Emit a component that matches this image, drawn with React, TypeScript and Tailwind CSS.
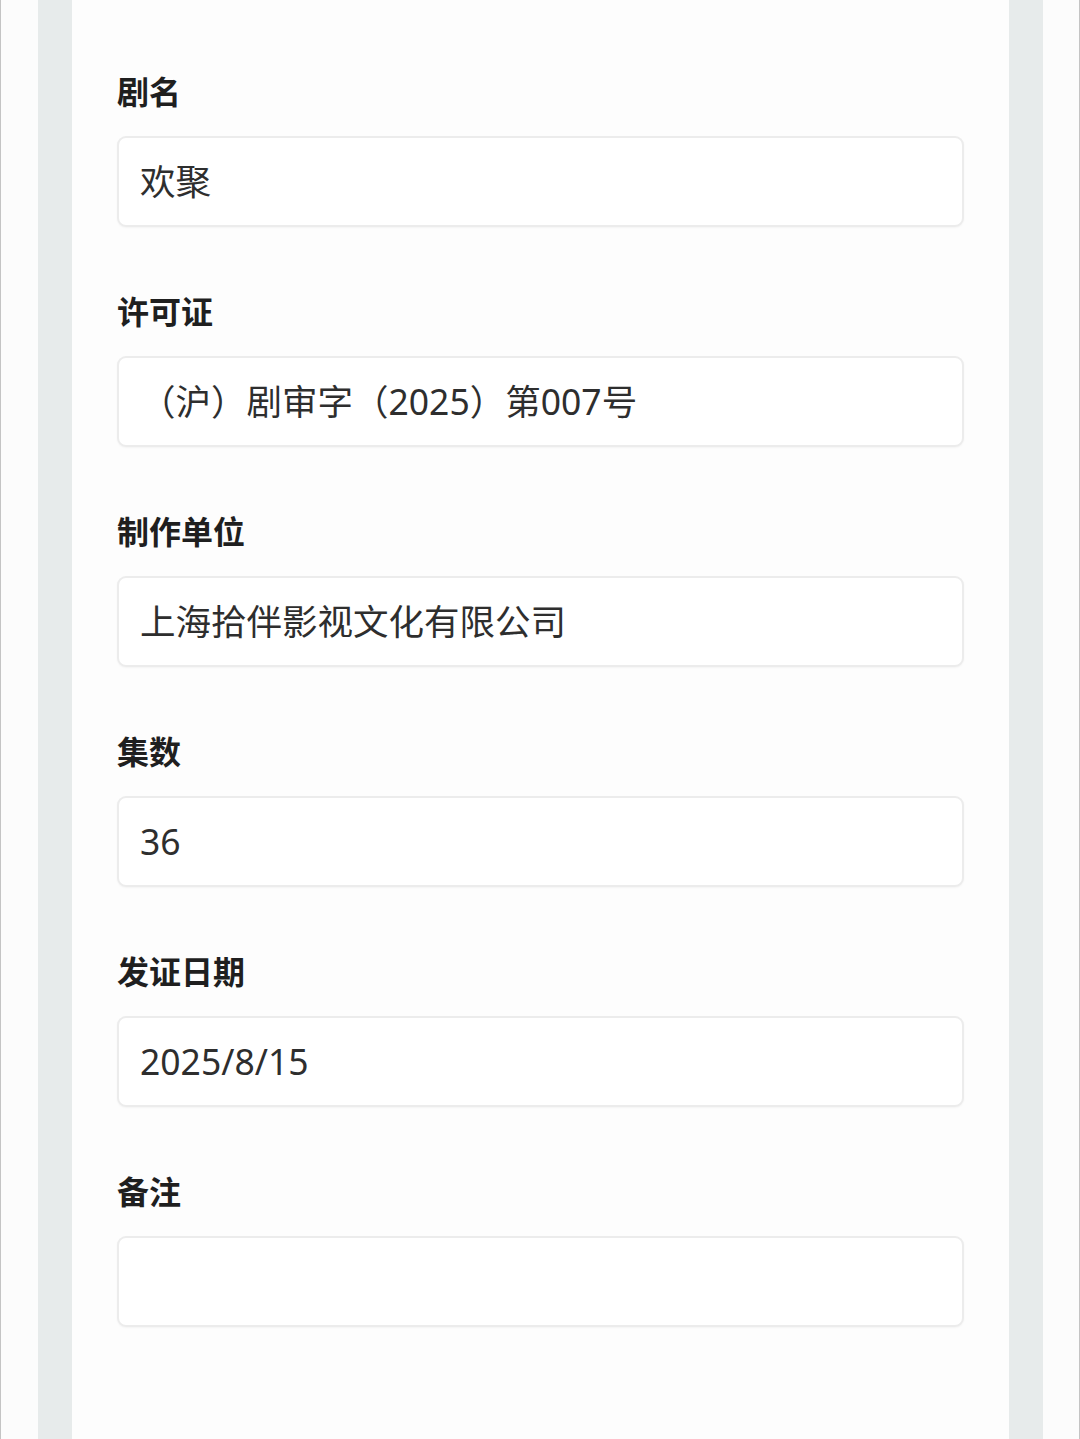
import React from "react";

const fields: { label: string; value: string }[] = [
  { label: "剧名", value: "欢聚" },
  { label: "许可证", value: "（沪）剧审字（2025）第007号" },
  { label: "制作单位", value: "上海拾伴影视文化有限公司" },
  { label: "集数", value: "36" },
  { label: "发证日期", value: "2025/8/15" },
  { label: "备注", value: "" },
];

export default function App() {
  return (
    <div
      className="flex h-[1439px] w-full overflow-hidden border-l border-r border-[#c4c4c4] bg-[#fcfcfc]"
      style={{ fontFamily: '"Noto Sans CJK SC", "Noto Sans", sans-serif' }}
    >
      <div className="w-[37px] shrink-0" />
      <div className="w-[34px] shrink-0 bg-[#e7ebeb]" />
      <div className="flex flex-1 flex-col bg-[#fdfdfd] px-[45px] pt-[74px]">
        {fields.map((f) => (
          <div key={f.label} className="mb-[67px] flex flex-col">
            <div className="h-[36px] text-[32px] font-bold leading-[32px] text-[#1f1f1f]">
              {f.label}
            </div>
            <div className="mt-[26px] flex h-[91px] items-center rounded-[9px] border-2 border-[#ececec] bg-white pl-[21px] font-['Noto_Sans','Noto_Sans_CJK_SC',sans-serif] text-[35.5px] text-[#2e2e2e] shadow-[0_1px_2px_rgba(0,0,0,0.04)]">
              {f.value}
            </div>
          </div>
        ))}
      </div>
      <div className="w-[34px] shrink-0 bg-[#e7ebeb]" />
      <div className="w-[36px] shrink-0" />
    </div>
  );
}
